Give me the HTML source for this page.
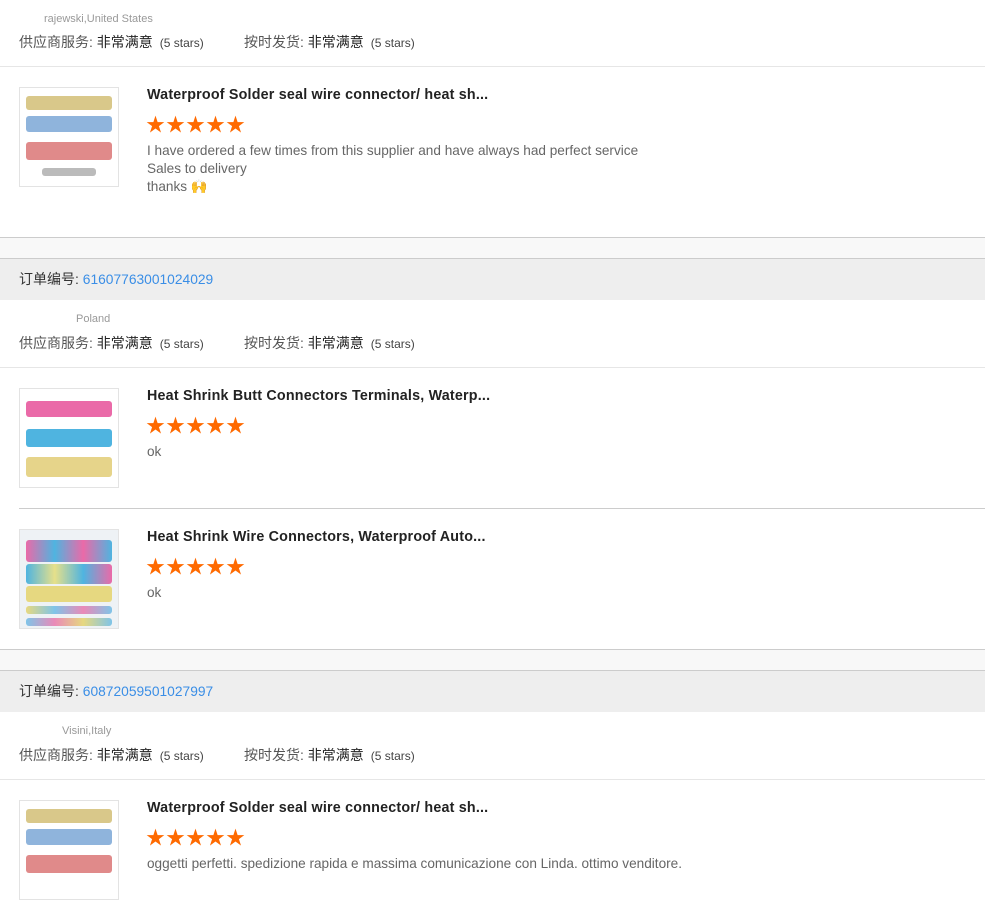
<!DOCTYPE html>
<html><head><meta charset="utf-8"><style>
*{margin:0;padding:0;box-sizing:border-box}
body{width:985px;height:871px;overflow:hidden;background:#fff;font-family:"Liberation Sans","Noto Sans CJK SC",sans-serif;position:relative;color:#333}
.a{position:absolute;white-space:nowrap}
.loc{font-size:11px;color:#999}
.rt{font-size:14px;color:#555}
.rt b{font-weight:normal;color:#222}
.rt i{font-style:normal;font-size:12px;color:#444;margin-left:7px}
.hl{position:absolute;left:0;width:985px;height:1px;background:#e6e6e6}
.gl{position:absolute;height:1px;background:#ccc}
.band{position:absolute;left:0;width:985px}
.ord{font-size:14px;color:#333}
.ord span{color:#3a8ee6;font-size:13.8px}
.img{position:absolute;left:19px;width:100px;height:100px;border:1px solid #e3e3e3;background:#fff;overflow:hidden}
.img div{position:absolute;left:6px;right:6px;border-radius:3px}
.ttl{font-size:14.3px;font-weight:bold;color:#222;letter-spacing:0.2px}
.st{font-size:19px;color:#ff6a00;line-height:20px;display:flex}
.st span{width:20px;display:block}
.tx{font-size:13.6px;color:#666;line-height:18px}
</style></head><body>

<div class="a loc" style="left:44px;top:13px">rajewski,United States</div>
<div class="a rt" style="left:19px;top:32px">供应商服务: <b>非常满意</b><i>(5 stars)</i></div>
<div class="a rt" style="left:244px;top:32px">按时发货: <b>非常满意</b><i>(5 stars)</i></div>
<div class="hl" style="top:66px"></div>

<div class="img" style="top:87px"><div style="top:8px;height:14px;background:#d9c88a"></div><div style="top:28px;height:16px;background:#8fb4dc"></div><div style="top:54px;height:18px;background:#e08a8a"></div><div style="top:80px;height:8px;left:22px;right:22px;background:#bbb"></div></div>
<div class="a ttl" style="left:147px;top:87px">Waterproof Solder seal wire connector/ heat sh...</div>
<div class="a st" style="left:146px;top:116px"><span>★</span><span>★</span><span>★</span><span>★</span><span>★</span></div>
<div class="a tx" style="left:147px;top:142px">I have ordered a few times from this supplier and have always had perfect service<br>Sales to delivery<br>thanks 🙌</div>

<div class="gl" style="left:0;width:985px;top:237px"></div>
<div class="band" style="top:238px;height:20px;background:#f8f8f8"></div>
<div class="gl" style="left:0;width:985px;top:258px"></div>
<div class="band" style="top:259px;height:41px;background:#eeeeee"></div>
<div class="a ord" style="left:19px;top:269px">订单编号: <span>61607763001024029</span></div>

<div class="a loc" style="left:76px;top:313px">Poland</div>
<div class="a rt" style="left:19px;top:333px">供应商服务: <b>非常满意</b><i>(5 stars)</i></div>
<div class="a rt" style="left:244px;top:333px">按时发货: <b>非常满意</b><i>(5 stars)</i></div>
<div class="hl" style="top:367px"></div>

<div class="img" style="top:388px"><div style="top:12px;height:16px;background:#ea6aa8"></div><div style="top:40px;height:18px;background:#4fb4e0"></div><div style="top:68px;height:20px;background:#e6d48a"></div></div>
<div class="a ttl" style="left:147px;top:388px">Heat Shrink Butt Connectors Terminals, Waterp...</div>
<div class="a st" style="left:146px;top:417px"><span>★</span><span>★</span><span>★</span><span>★</span><span>★</span></div>
<div class="a tx" style="left:147px;top:443px">ok</div>
<div class="gl" style="left:19px;width:966px;top:508px"></div>

<div class="img" style="top:529px;background:#eef2f5"><div style="top:10px;height:22px;background:linear-gradient(90deg,#ea6aa8,#4fb4e0,#ea6aa8,#4fb4e0)"></div><div style="top:34px;height:20px;background:linear-gradient(90deg,#4fb4e0,#e6e08a,#4fb4e0,#ea6aa8)"></div><div style="top:56px;height:16px;background:#e6d880"></div><div style="top:76px;height:8px;background:linear-gradient(90deg,#e6d880,#7fc4e8,#ea8ab8,#7fc4e8)"></div><div style="top:88px;height:8px;background:linear-gradient(90deg,#7fc4e8,#ea8ab8,#e6d880,#7fc4e8)"></div></div>
<div class="a ttl" style="left:147px;top:529px">Heat Shrink Wire Connectors, Waterproof Auto...</div>
<div class="a st" style="left:146px;top:558px"><span>★</span><span>★</span><span>★</span><span>★</span><span>★</span></div>
<div class="a tx" style="left:147px;top:584px">ok</div>

<div class="gl" style="left:0;width:985px;top:649px"></div>
<div class="band" style="top:650px;height:20px;background:#f8f8f8"></div>
<div class="gl" style="left:0;width:985px;top:670px"></div>
<div class="band" style="top:671px;height:41px;background:#eeeeee"></div>
<div class="a ord" style="left:19px;top:681px">订单编号: <span>60872059501027997</span></div>

<div class="a loc" style="left:62px;top:725px">Visini,Italy</div>
<div class="a rt" style="left:19px;top:745px">供应商服务: <b>非常满意</b><i>(5 stars)</i></div>
<div class="a rt" style="left:244px;top:745px">按时发货: <b>非常满意</b><i>(5 stars)</i></div>
<div class="hl" style="top:779px"></div>

<div class="img" style="top:800px"><div style="top:8px;height:14px;background:#d9c88a"></div><div style="top:28px;height:16px;background:#8fb4dc"></div><div style="top:54px;height:18px;background:#e08a8a"></div></div>
<div class="a ttl" style="left:147px;top:800px">Waterproof Solder seal wire connector/ heat sh...</div>
<div class="a st" style="left:146px;top:829px"><span>★</span><span>★</span><span>★</span><span>★</span><span>★</span></div>
<div class="a tx" style="left:147px;top:855px">oggetti perfetti. spedizione rapida e massima comunicazione con Linda. ottimo venditore.</div>
</body></html>
